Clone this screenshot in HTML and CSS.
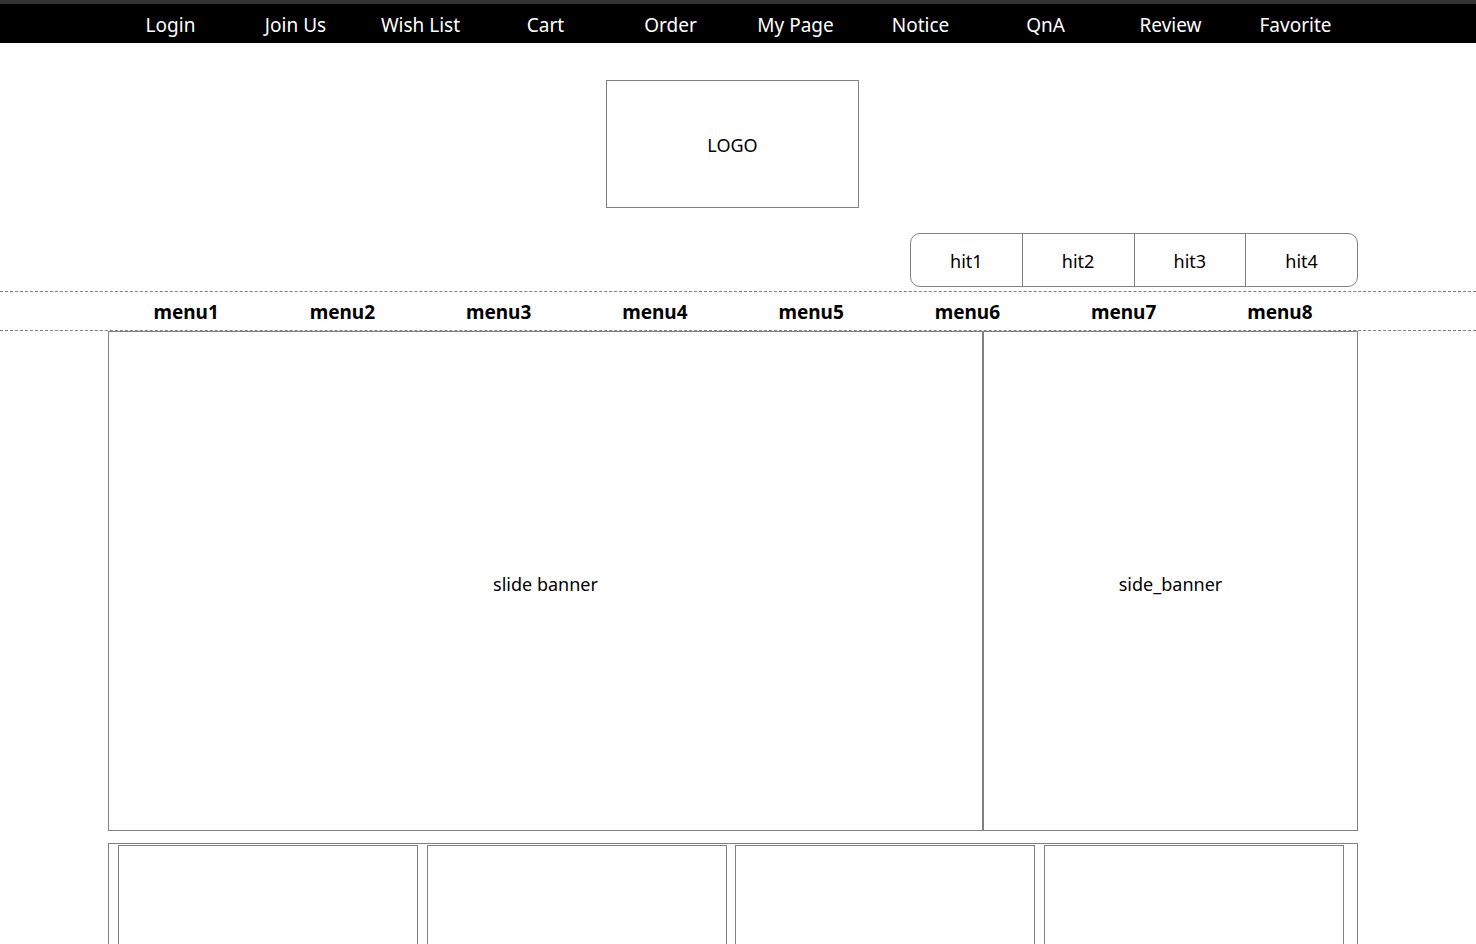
FILE: index.html
```html
<!DOCTYPE html>
<html lang="ko">
<head>
<meta charset="utf-8">
<title>Shop</title>
<link rel="stylesheet" href="styles.css">
</head>
<body>
<div class="topbar">
  <ul class="gnb">
    <li>Login</li>
    <li>Join Us</li>
    <li>Wish List</li>
    <li>Cart</li>
    <li>Order</li>
    <li>My Page</li>
    <li>Notice</li>
    <li>QnA</li>
    <li>Review</li>
    <li>Favorite</li>
  </ul>
</div>
<header class="header">
  <div class="wrap">
    <div class="logo">LOGO</div>
    <div class="hits">
      <div class="hit">hit1</div>
      <div class="hit">hit2</div>
      <div class="hit">hit3</div>
      <div class="hit">hit4</div>
    </div>
  </div>
</header>
<nav class="menubar">
  <ul class="menu wrap">
    <li>menu1</li>
    <li>menu2</li>
    <li>menu3</li>
    <li>menu4</li>
    <li>menu5</li>
    <li>menu6</li>
    <li>menu7</li>
    <li>menu8</li>
  </ul>
</nav>
<main class="main">
  <div class="wrap">
    <div class="banners">
      <div class="slide">slide banner</div>
      <div class="side">side_banner</div>
    </div>
    <div class="boxes">
      <div class="box"></div>
      <div class="box"></div>
      <div class="box"></div>
      <div class="box"></div>
    </div>
  </div>
</main>
</body>
</html>
```
FILE: styles.css
```css
* { box-sizing: border-box; }
html, body { margin: 0; padding: 0; background: #fff; }
body {
  font-family: "Noto Sans", "Noto Sans CJK KR", sans-serif;
  color: #000;
  font-size: 18px;
}
ul { list-style: none; margin: 0; padding: 0; }

.topbar {
  background: #000;
  border-top: 4px solid #333;
  height: 43px;
  padding-right: 10px;
}
.gnb {
  width: 1250px;
  margin: 0 auto;
  display: flex;
  height: 39px;
  padding-top: 3px;
}
.gnb li {
  width: 125px;
  color: #fff;
  font-size: 19px;
  text-align: center;
  line-height: 36px;
}

.header { padding-right: 10px; }
.wrap { width: 1250px; margin: 0 auto; }
.header .wrap {
  display: flex;
  flex-direction: column;
  align-items: center;
  padding-top: 37px;
  padding-bottom: 4px;
}
.logo {
  width: 253px;
  height: 128px;
  border: 1px solid #808080;
  display: flex;
  align-items: center;
  justify-content: center;
  font-size: 18px;
  padding-top: 2px;
  margin-right: 1px;
}
.hits {
  align-self: flex-end;
  margin-top: 25px;
  width: 448px;
  height: 54px;
  border: 1px solid #808080;
  border-radius: 10px;
  display: flex;
}
.hit {
  flex: 1;
  display: flex;
  align-items: center;
  justify-content: center;
  font-size: 18px;
  padding-top: 2px;
}
.hit + .hit { border-left: 1px solid #808080; }

.menubar {
  border-top: 1px dashed #808080;
  border-bottom: 1px dashed #808080;
  padding-right: 10px;
}
.menu {
  display: flex;
  height: 38px;
  padding-top: 2px;
}
.menu li {
  flex: 1;
  text-align: center;
  font-weight: bold;
  font-size: 19px;
  line-height: 36px;
}

.main { padding-right: 10px; }
.banners { display: flex; height: 500px; }
.slide, .side {
  border: 1px solid #808080;
  display: flex;
  align-items: center;
  justify-content: center;
  font-size: 18px;
  padding-top: 5px;
}
.slide { width: 875px; }
.side { width: 375px; }
.boxes {
  margin-top: 12px;
  border: 1px solid #808080;
  height: 200px;
  display: flex;
  gap: 8.67px;
  padding: 1px 0 0 9px;
}
.box {
  width: 300px;
  height: 180px;
  border: 1px solid #808080;
}
```
